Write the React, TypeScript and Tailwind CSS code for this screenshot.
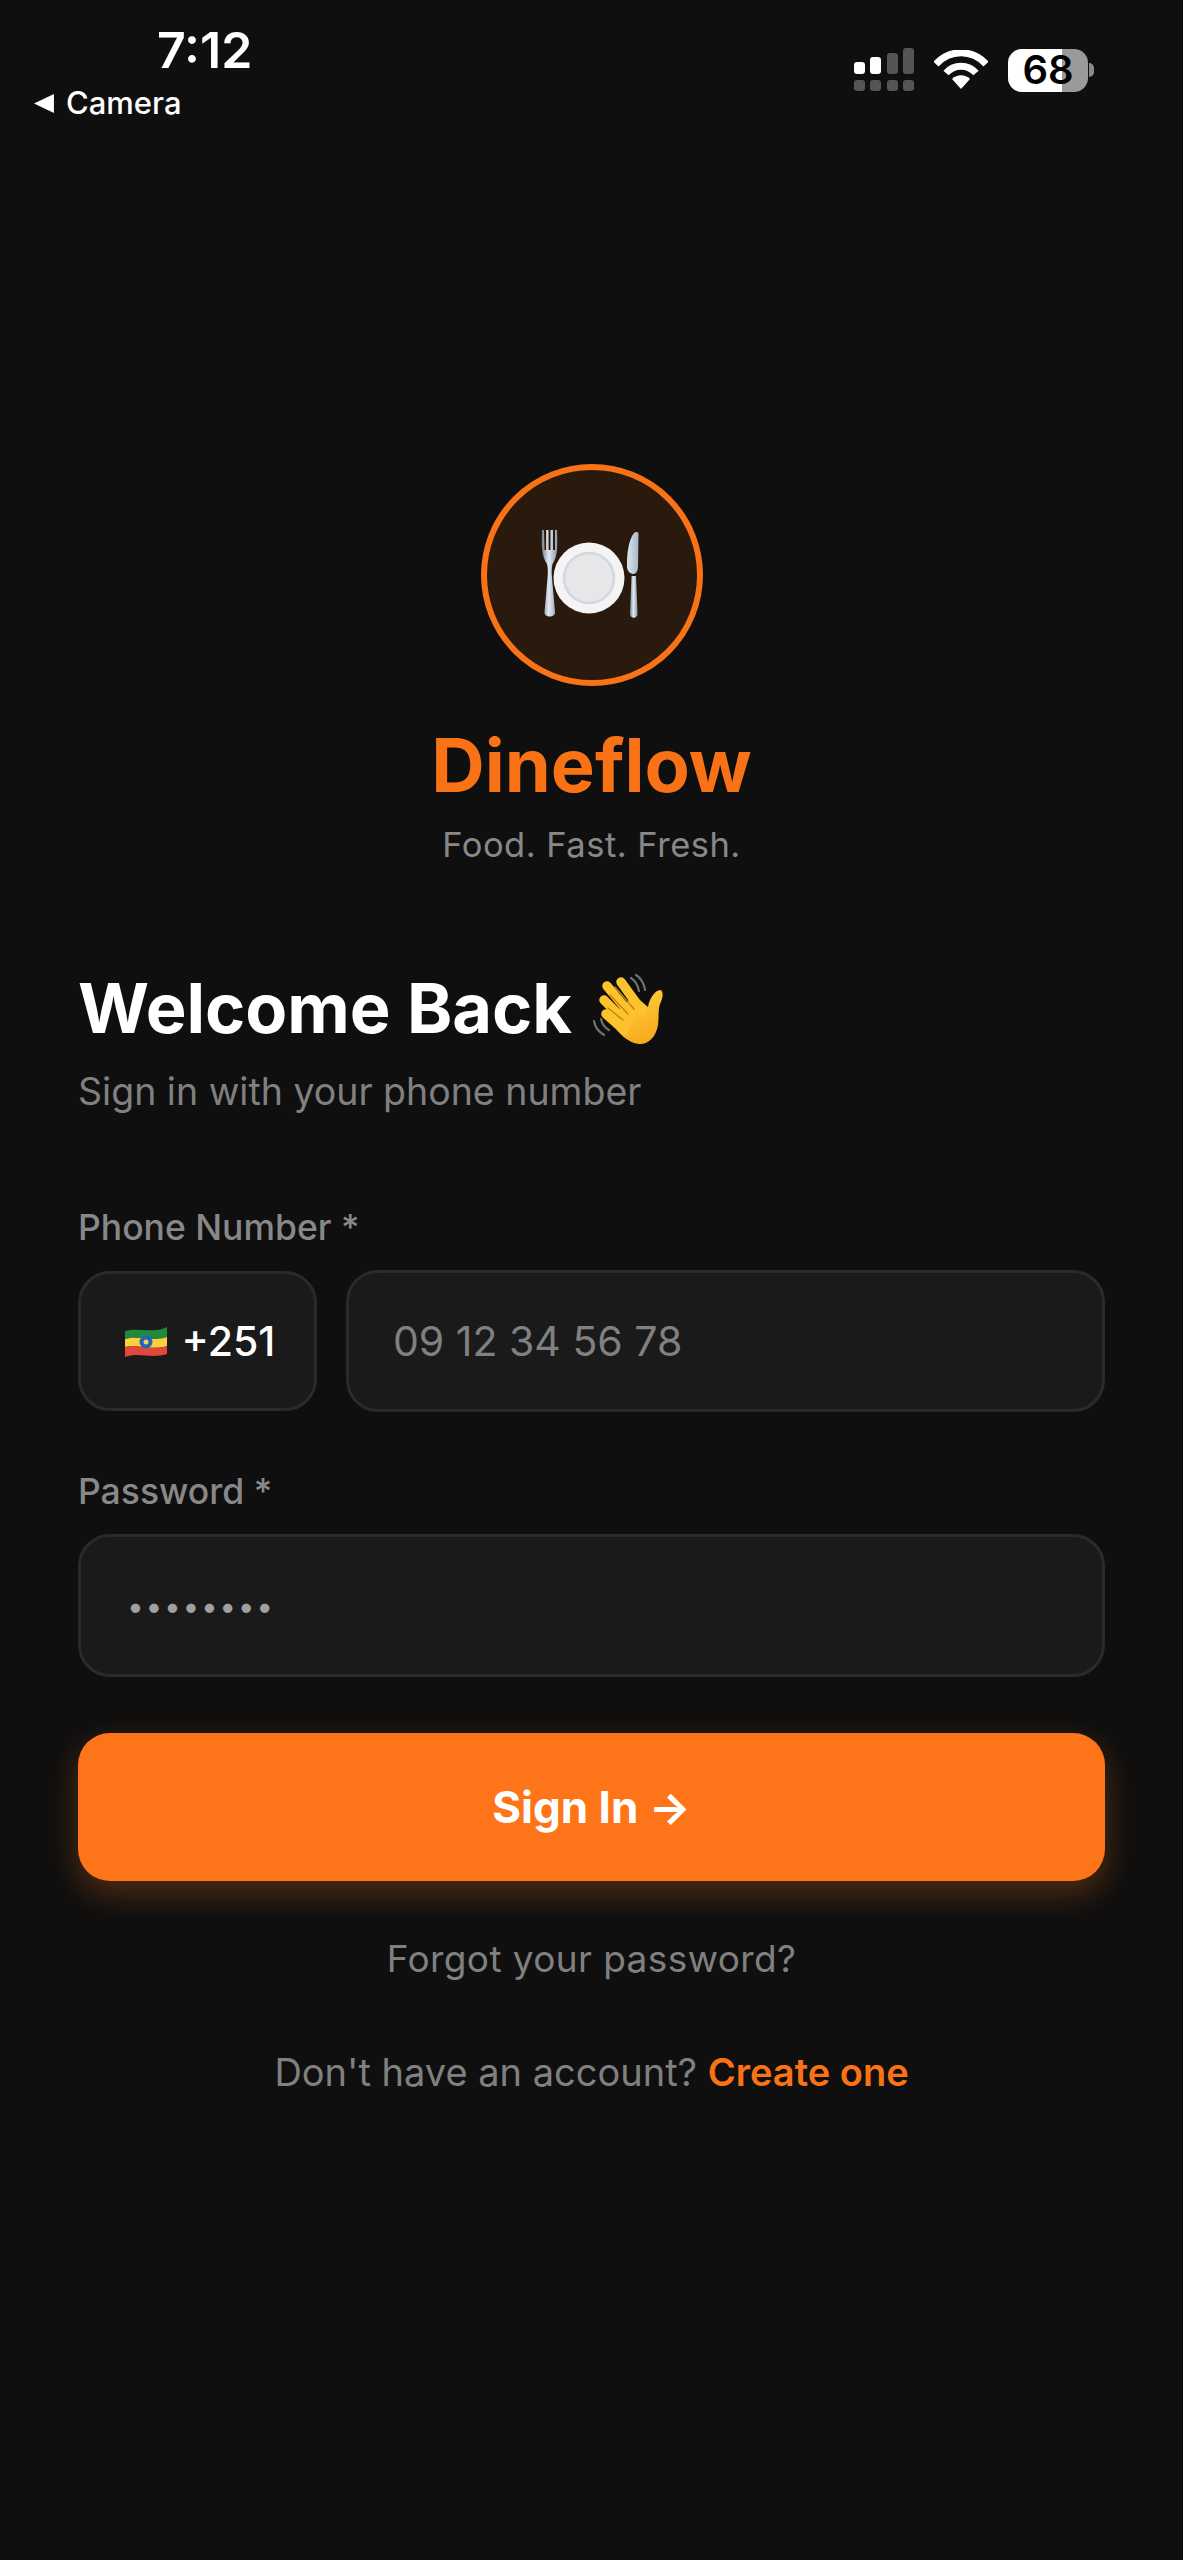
const sans = "font-['Inter',sans-serif]";

function SignalIcon() {
  return (
    <svg width="60" height="44" viewBox="0 0 60 44">
      <rect x="0" y="14" width="11" height="12" rx="3" fill="#fff" />
      <rect x="16" y="9" width="11" height="17" rx="3" fill="#fff" />
      <rect x="33" y="5" width="11" height="21" rx="3" fill="#555" />
      <rect x="49" y="0" width="11" height="26" rx="3" fill="#555" />
      <rect x="0" y="32" width="11" height="11" rx="3" fill="#555" />
      <rect x="16" y="32" width="11" height="11" rx="3" fill="#555" />
      <rect x="33" y="32" width="11" height="11" rx="3" fill="#555" />
      <rect x="49" y="32" width="11" height="11" rx="3" fill="#555" />
    </svg>
  );
}

function WifiIcon() {
  return (
    <svg width="54" height="40" viewBox="0 0 54 40">
      <path d="M2 14 C16 -1 38 -1 52 14" fill="none" stroke="#fff" strokeWidth="7" strokeLinejoin="round" />
      <path d="M12 23 C20 14 34 14 42 23" fill="none" stroke="#fff" strokeWidth="7" />
      <path d="M27 39 L18 29 C23 24 31 24 36 29 Z" fill="#fff" />
    </svg>
  );
}

function PlateIcon() {
  return (
    <svg width="120" height="100" viewBox="0 0 120 100" className="mr-[3px] mt-[2px]">
      <defs>
        <linearGradient id="steel" x1="0" x2="1" y1="0" y2="0">
          <stop offset="0" stopColor="#75828f" />
          <stop offset="0.45" stopColor="#e4ebf2" />
          <stop offset="1" stopColor="#8c9aa8" />
        </linearGradient>
        <linearGradient id="blade" x1="0" x2="1" y1="0" y2="0">
          <stop offset="0" stopColor="#dfe7ef" />
          <stop offset="1" stopColor="#a5b6c7" />
        </linearGradient>
      </defs>
      <path d="M12 4 L14 4 L14.5 24 L16 24 L16 4 L18.5 4 L18.5 24 L20.5 24 L20.5 4 L23 4 L23 24 L25 24 L25 4 L27 4 C27.5 20 28 30 22.5 38 C21.5 42 21.5 46 22 52 L25 86 C25.5 92 14 92 14.5 86 L17.5 52 C18 46 18 42 17 38 C11.5 30 11.5 20 12 4 Z" fill="url(#steel)" />
      <circle cx="59" cy="52" r="35.5" fill="#f4f4f5" />
      <circle cx="59" cy="52" r="25" fill="#e6e7e9" stroke="#d2d7e0" strokeWidth="2.5" />
      <path d="M101.5 50 L100 88 C100 93 107.5 93 107.5 88 L106 50 Z" fill="url(#steel)" />
      <path d="M106 6 C102 7 97 18 97 40 C97 46 101 48 103.5 48 C106 48 108 45 108 40 L108.5 8 C108.5 6 107 6 106 6 Z" fill="url(#blade)" />
    </svg>
  );
}

function HandIcon() {
  return (
    <svg width="90" height="85" viewBox="0 0 90 85" className="ml-[10px] shrink-0">
      <defs>
        <linearGradient id="skin" x1="0.2" x2="0.7" y1="0" y2="1">
          <stop offset="0" stopColor="#ffd23f" />
          <stop offset="1" stopColor="#f7a81b" />
        </linearGradient>
      </defs>
      <path d="M49 11 C54 14 56 19 57 24 M54 8 C59 11 62 17 63 23 M12 54 C13 60 17 65 22 68 M19 52 C20 57 23 61 27 63" fill="none" stroke="#6f6f6f" strokeWidth="2.2" strokeLinecap="round" />
      <path d="M30 50 L52 28 L66 40 C67 33 72 24 78 23 C82 24 81 31 78 37 C76 42 77 50 76 58 C74 71 65 78 57 77 C46 76 36 66 30 56 Z" fill="url(#skin)" />
      <g fill="none" stroke="#fdc32d" strokeWidth="9.5" strokeLinecap="round">
        <path d="M25 19 L50 49" />
        <path d="M39 15 L60 44" />
        <path d="M22 33 L45 56" />
        <path d="M24 47 L42 63" />
      </g>
      <g fill="none" stroke="#c9820f" strokeWidth="1.4" strokeLinecap="round">
        <path d="M33 20 L52 42" />
        <path d="M28 28 L46 47" />
        <path d="M26 41 L41 53" />
      </g>
    </svg>
  );
}

function FlagIcon() {
  return (
    <svg width="44" height="32" viewBox="0 0 44 32" className="mr-[14px] shrink-0">
      <path d="M1 5 C14 1 28 8 43 1 V11 C28 16 14 9 1 13 Z" fill="#1f8a3e" />
      <path d="M1 13 C14 9 28 16 43 11 V20 C28 25 14 18 1 21 Z" fill="#f7d23e" />
      <path d="M1 21 C14 18 28 25 43 20 V28 C28 33 14 26 1 31 Z" fill="#e2483a" />
      <circle cx="22" cy="16" r="6.5" fill="#2563b8" />
      <circle cx="22" cy="16" r="2.5" fill="#e9d35a" />
    </svg>
  );
}

function Label({ children }: { children: React.ReactNode }) {
  return <p className="text-[35.5px] leading-[40px] font-medium text-[#888888]">{children}</p>;
}

export default function App() {
  return (
    <main className={`${sans} min-h-[2560px] w-full bg-[#0f0f0f] text-white`}>
      <header className="flex h-[464px] items-start justify-between pl-[34px] pr-[89px]">
        <div className="pt-[25px]">
          <p className="pl-[123px] text-[50px] leading-[50px] font-semibold">7:12</p>
          <div className="mt-[3px] flex items-center gap-[11px]">
            <svg width="21" height="21" viewBox="0 0 20 20">
              <path d="M0 10 L19 1 V19 Z" fill="#fff" />
            </svg>
            <span className="text-[31px] leading-[50px] font-medium">Camera</span>
          </div>
        </div>
        <div className="flex items-center gap-[20px] pt-[48px]">
          <SignalIcon />
          <WifiIcon />
          <div className="flex items-center gap-[1px]">
            <div className="flex h-[43px] w-[80px] items-center justify-center rounded-[14px] bg-[linear-gradient(90deg,#ffffff_67%,#9a9a9a_67%)] text-[40px] font-semibold text-black">
              68
            </div>
            <div className="h-[14px] w-[5px] rounded-r-full bg-[#8a8a8a]" />
          </div>
        </div>
      </header>

      <section className="flex flex-col items-center">
        <div className="flex size-[222px] items-center justify-center rounded-full border-[6px] border-[#f97316] bg-[#2a1a0e]">
          <PlateIcon />
        </div>
        <h1 className="mt-[35px] text-[74px] leading-[88px] font-bold text-[#f97316]">Dineflow</h1>
        <p className="mt-[14px] text-[34.5px] leading-[44px] tracking-[0.5px] text-[#888888]">Food. Fast. Fresh.</p>
      </section>

      <section className="px-[78px] pt-[102px]">
        <div className="flex h-[80px] items-center">
          <h2 className="text-[68.5px] leading-[80px] font-bold">Welcome Back</h2>
          <HandIcon />
        </div>
        <p className="mt-[21px] text-[37.5px] leading-[44px] text-[#808080]">Sign in with your phone number</p>

        <div className="mt-[94px]">
          <Label>Phone Number *</Label>
        </div>
        <div className="mt-[22px] flex items-center gap-[29px]">
          <div className="flex h-[140px] w-[239px] items-center justify-center rounded-[32px] border-[3px] border-[#2a2a2a] bg-[#1a1a1a] pl-[4px] pt-[2px]">
            <FlagIcon />
            <span className="text-[41px] font-medium">+251</span>
          </div>
          <div className="flex h-[142px] flex-1 items-center rounded-[32px] border-[3px] border-[#2a2a2a] bg-[#1a1a1a] pl-[44px] pt-[2px] text-[41px] text-[#808080]">
            09 12 34 56 78
          </div>
        </div>

        <div className="mt-[60px]">
          <Label>Password *</Label>
        </div>
        <div className="mt-[22px] flex h-[143px] items-center rounded-[32px] border-[3px] border-[#2a2a2a] bg-[#1a1a1a] pl-[46px] pt-[2px] text-[30px] tracking-[1.6px] text-[#a0a0a0]">
          ••••••••
        </div>

        <button className="mt-[56px] flex h-[148px] w-full items-center justify-center rounded-[32px] bg-[#fd7518] text-[44px] font-bold text-white shadow-[0_12px_32px_rgba(249,115,22,0.3)]">
          Sign In →
        </button>

        <p className="mt-[56px] text-center text-[37px] leading-[44px] tracking-[0.4px] text-[#808080]">Forgot your password?</p>
        <p className="mt-[69px] text-center text-[38px] leading-[44px] text-[#808080]">
          Don't have an account? <span className="font-semibold text-[#f97316]">Create one</span>
        </p>
      </section>
    </main>
  );
}
